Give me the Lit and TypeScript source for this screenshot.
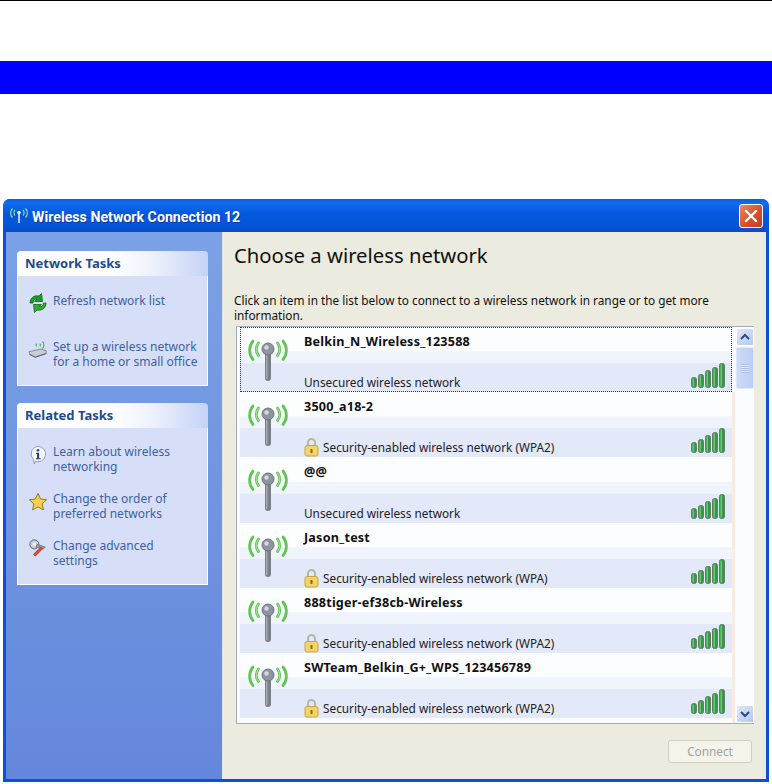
import { LitElement, html, css, svg } from "lit";
import { customElement } from "lit/decorators.js";

const nets = [
  { n: "Belkin_N_Wireless_123588", s: "Unsecured wireless network", lock: false, sel: true },
  { n: "3500_a18-2", s: "Security-enabled wireless network (WPA2)", lock: true },
  { n: "@@", s: "Unsecured wireless network", lock: false },
  { n: "Jason_test", s: "Security-enabled wireless network (WPA)", lock: true },
  { n: "888tiger-ef38cb-Wireless", s: "Security-enabled wireless network (WPA2)", lock: true },
  { n: "SWTeam_Belkin_G+_WPS_123456789", s: "Security-enabled wireless network (WPA2)", lock: true },
];

const antenna = html`<svg class="ant" width="44" height="50" viewBox="0 0 44 50">
  <g fill="none" stroke-linecap="round">
    <g stroke="#63c455" stroke-width="2.800">
      <path d="M12.500 5c-3 3.500-3 9 0 12.500"/><path d="M7 3c-4.500 5.500-4.500 13 0 18.500"/>
      <path d="M31.500 5c3 3.500 3 9 0 12.500"/><path d="M37 3c4.500 5.500 4.500 13 0 18.500"/>
    </g>
    <g stroke="#aee3a4" stroke-width="1">
      <path d="M12.500 5c-3 3.500-3 9 0 12.500"/><path d="M31.500 5c3 3.500 3 9 0 12.500"/>
    </g>
  </g>
  <rect x="19" y="11" width="6" height="32" rx="3" fill="#7a7f88"/>
  <rect x="20" y="16" width="1.500" height="25" fill="#a8abb2"/>
  <circle cx="22" cy="11" r="6" fill="#8f94a0" stroke="#6d717c"/>
  <circle cx="20.500" cy="9.500" r="2.200" fill="#d5d8df"/>
</svg>`;

const lock = html`<svg class="lock" width="15" height="20" viewBox="0 0 15 20">
  <path d="M4 9V5.500a3.500 3.500 0 0 1 7 0V9" fill="none" stroke="#b5b7a8" stroke-width="2"/>
  <rect x="1" y="8.500" width="13" height="10.500" rx="2" fill="#f2d468" stroke="#c9a63e"/>
  <rect x="6.500" y="12" width="2" height="4" fill="#8a6a14"/>
</svg>`;

const bars = html`<svg class="bars" width="34" height="25" viewBox="0 0 34 25">
  ${[[0, 10], [7, 13], [14, 17], [21, 20], [28, 24]].map(
    ([x, h]) => svg`<rect x=${x + 0.5} y=${24.5 - h} width="5" height=${h} rx="2" fill="#349a45" stroke="#5f7f68"/>
      <rect x=${x + 1.5} y=${25.5 - h} width="1.500" height=${h - 2} fill="#6cc676"/>`
  )}
</svg>`;

const refresh = html`<svg width="20" height="20" viewBox="0 0 20 20">
  <path d="M2 10C2 5 6 2 11 3l2.500-2.500 1 8-8 0 2.500-2.200C7 5.800 5.200 7 5 10z" fill="#1f9a2a" stroke="#11661a" stroke-width=".8"/>
  <path d="M18 10c0 5-4 8-9 7l-2.500 2.500-1-8 8 0-2.500 2.200c2.500.5 4.300-.7 4.500-3.700z" fill="#2cae2f" stroke="#11661a" stroke-width=".8"/>
</svg>`;

const router = html`<svg width="22" height="20" viewBox="0 0 22 20">
  <path d="M1 13l13-3 6 2v3L8 19l-6-3z" fill="#c9ccd4" stroke="#6d7280" stroke-width=".8"/>
  <path d="M2 16l6 3 12-4" fill="none" stroke="#555b68"/>
  <path d="M13 4c1 1 1 2 0 3M16 1.500c2 2 2 6 0 8M9.500 4c-1 1-1 2 0 3" fill="none" stroke="#49b04a" stroke-width="1.200"/>
</svg>`;

const info = html`<svg width="22" height="22" viewBox="0 0 22 22">
  <path d="M11 1.500a8.500 8.500 0 1 1-3 16.500l-1 3-1-5A8.500 8.500 0 0 1 11 1.500z" fill="#f4f6fb" stroke="#8a95ad"/>
  <circle cx="11" cy="5.800" r="1.400" fill="#1f3f8a"/>
  <path d="M9 8.500h3.200v6H14v1.300H8.800v-1.300h1.200V9.800H9z" fill="#1f3f8a"/>
</svg>`;

const star = html`<svg width="22" height="22" viewBox="0 0 22 22">
  <path d="M11 1.500l2.900 6.200 6.600.8-4.900 4.500 1.300 6.700L11 16.400 5.100 19.700l1.300-6.700L1.500 8.500l6.600-.8z" fill="#f6d24c" stroke="#8f7a24" stroke-width="1.100"/>
</svg>`;

const tools = html`<svg width="22" height="20" viewBox="0 0 22 20">
  <circle cx="7" cy="6" r="5" fill="#c9ccd4" stroke="#555b68"/>
  <circle cx="7" cy="6" r="2" fill="#f4f4f4"/>
  <path d="M10 6l9 3-2 2-8-2z" fill="#9a9ea8" stroke="#555b68" stroke-width=".7"/>
  <path d="M14 9L6 17l2 2 8-8z" fill="#d8512c" stroke="#96321a" stroke-width=".7"/>
</svg>`;

const wifiTitle = html`<svg width="24" height="18" viewBox="0 0 24 18">
  <g fill="none" stroke="#9fe39a" stroke-width="1.100">
    <path d="M8 3c-1.500 1.500-1.500 4 0 5.500M5.500 1.500c-2.500 2.500-2.500 6.500 0 9"/>
    <path d="M16 3c1.500 1.500 1.500 4 0 5.500M18.500 1.500c2.500 2.500 2.500 6.500 0 9"/>
  </g>
  <rect x="11.200" y="6" width="1.600" height="10" fill="#dfe6f2"/>
  <circle cx="12" cy="5.500" r="1.800" fill="#eef2f8"/>
</svg>`;

@customElement("app-root")
export class AppRoot extends LitElement {
  static styles = css`
    :host { display: block; width: 772px; height: 784px; background: #fff; overflow: hidden; font-family: "Noto Sans", sans-serif; }
    * { box-sizing: border-box; }
    .rule { height: 1px; background: #000; }
    .band { height: 33px; margin-top: 60px; background: #0000ff; }
    .win { width: 766px; height: 583px; margin: 105px 0 0 3px; display: flex; flex-direction: column; background: #0b50d8; border-radius: 7px 7px 0 0; overflow: hidden; }
    .title { height: 33px; flex: none; padding: 1px 6px 0 4px; display: flex; align-items: center; gap: 1px;
      background: linear-gradient(#0a5ce0 0%, #0f6cf0 12%, #0458dd 45%, #0455da 80%, #0a4ccb 100%); }
    .title span { color: #fff; font: 700 14.200px/1 "Roboto", sans-serif; flex: 1; padding-top: 3px; text-shadow: 1px 1px 0 #0a3aa0; }
    .close { width: 24px; height: 24px; flex: none; border: 1px solid #fff; border-radius: 3px; background: linear-gradient(135deg, #e88a6c, #d6502c 55%, #c23d1c); display: flex; align-items: center; justify-content: center; }
    .main { flex: 1; display: flex; padding: 0 3px 3px 3px; min-height: 0; }
    .side { width: 216px; flex: none; background: linear-gradient(#7ba2e6, #6487dc); padding: 19px 14px 0 11px; display: flex; flex-direction: column; gap: 17px; }
    .box { width: 191px; display: flex; flex-direction: column; }
    .box.a { height: 135px; } .box.b { height: 182px; }
    .bh { height: 25px; flex: none; border-radius: 4px 4px 0 0; padding: 0 0 0 8px; display: flex; align-items: center; color: #1c4a92; font: 700 13px/1 "Noto Sans", sans-serif;
      background: linear-gradient(90deg, #fff 0%, #fff 50%, #eef2fc 70%, #c6d3f7 100%); }
    .bb { flex: 1; background: #d6dff7; border: 1px solid #fff; border-top: none; padding: 0 0 0 10px; display: flex; flex-direction: column; }
    .a .bb { padding-top: 17px; gap: 26px; } .b .bb { padding-top: 16px; gap: 17px; }
    .task { display: flex; gap: 5px; color: #3f5fa3; font: 12px/15px "Noto Sans", sans-serif; align-items: flex-start; }
    .task .ic { width: 20px; flex: none; display: flex; justify-content: center; }
    .task div.t { white-space: pre; }
    .content { flex: 1; min-width: 0; background: #ecebdf; padding: 0 12px 0 11px; display: flex; flex-direction: column; border-left: 1px solid #e4e4d8; }
    h1 { margin: 11px 0 0; color: #111; font: 400 20.300px/24px "Noto Sans", sans-serif; height: 24px; }
    p { margin: 26px 0 0; height: 30px; font: 11.800px/15px "Noto Sans", sans-serif; color: #111; white-space: pre; }
    .list { margin: 3px 0 0 2px; width: 518px; height: 398px; flex: none; background: #fbfcff; border: 1px solid #a4adc0; display: flex; padding: 0 1px; }
    .rows { width: 494px; flex: none; padding-left: 2px; }
    .row { height: 65.200px; display: grid; grid-template-columns: 64px 1fr auto; position: relative; padding-right: 7px;
      background: linear-gradient(#fcfdff 0, #fcfdff 37%, #f0f4fd 38%, #f0f4fd 55%, #e3e9f9 56%, #e3e9f9 100%); }
    .row.sel { outline: 1px dotted #333; outline-offset: -1px; }
    .ant { margin: 11px 0 0 6px; }
    .txt { display: flex; flex-direction: column; justify-content: space-between; padding: 6px 0 1px; min-width: 0; }
    .nm { font: 700 12.600px/17px "Noto Sans", sans-serif; letter-spacing: .2px; color: #111; }
    .st { font: 11.800px/17px "Noto Sans", sans-serif; color: #222; display: flex; align-items: flex-end; gap: 4px; }
    .lock { margin-bottom: -1px; flex: none; }
    .bars { align-self: end; margin-bottom: 4px; }
    .peach { width: 3px; flex: none; background: #faebdf; margin-top: 65px; }
    .sb { width: 18px; flex: none; margin-left: 1px; padding-top: 1px; display: flex; flex-direction: column; background: #fbfcff; }
    .btn { height: 18px; flex: none; border-radius: 2px; background: linear-gradient(135deg, #dfe8fb, #b6c8f0); border: 1px solid #fff; display: flex; align-items: center; justify-content: center; }
    .thumb { height: 42px; margin-top: 1px; flex: none; border-radius: 2px; border: 1px solid #dfe8fb; background: linear-gradient(90deg, #cfdcf8, #bccdf4); display: flex; align-items: center; justify-content: center; }
    .grip { width: 8px; height: 9px; background: repeating-linear-gradient(#a9bce6 0 1px, #e4ebfb 1px 2px); }
    .sp { flex: 1; }
    .foot { display: flex; justify-content: flex-end; margin-top: 16px; padding-right: 2px; }
    .connect { width: 84px; height: 23px; border: 1px solid #cfcdbd; border-radius: 3px; background: #f5f4ec; color: #a3a297; font: 11.800px/21px "Noto Sans", sans-serif; text-align: center; }
  `;

  render() {
    return html`
      <div class="rule"></div>
      <div class="band"></div>
      <div class="win">
        <div class="title">
          ${wifiTitle}<span>Wireless Network Connection 12</span>
          <div class="close"><svg width="14" height="14" viewBox="0 0 14 14"><path d="M2 2l10 10M12 2L2 12" stroke="#fff" stroke-width="2.400" stroke-linecap="round"/></svg></div>
        </div>
        <div class="main">
          <div class="side">
            <div class="box a">
              <div class="bh">Network Tasks</div>
              <div class="bb">
                <div class="task"><div class="ic">${refresh}</div><div class="t">Refresh network list</div></div>
                <div class="task"><div class="ic">${router}</div><div class="t">Set up a wireless network
for a home or small office</div></div>
              </div>
            </div>
            <div class="box b">
              <div class="bh">Related Tasks</div>
              <div class="bb">
                <div class="task"><div class="ic">${info}</div><div class="t">Learn about wireless
networking</div></div>
                <div class="task"><div class="ic">${star}</div><div class="t">Change the order of
preferred networks</div></div>
                <div class="task"><div class="ic">${tools}</div><div class="t">Change advanced
settings</div></div>
              </div>
            </div>
          </div>
          <div class="content">
            <h1>Choose a wireless network</h1>
            <p>Click an item in the list below to connect to a wireless network in range or to get more
information.</p>
            <div class="list">
              <div class="rows">
                ${nets.map(
                  (r) => html`<div class="row ${r.sel ? "sel" : ""}">
                    ${antenna}
                    <div class="txt">
                      <div class="nm">${r.n}</div>
                      <div class="st">${r.lock ? lock : ""}<span>${r.s}</span></div>
                    </div>
                    ${bars}
                  </div>`
                )}
              </div>
              <div class="peach"></div>
              <div class="sb">
                <div class="btn"><svg width="10" height="8" viewBox="0 0 10 8"><path d="M1 6l4-4 4 4" fill="none" stroke="#2b4a86" stroke-width="2"/></svg></div>
                <div class="thumb"><div class="grip"></div></div>
                <div class="sp"></div>
                <div class="btn"><svg width="10" height="8" viewBox="0 0 10 8"><path d="M1 2l4 4 4-4" fill="none" stroke="#2b4a86" stroke-width="2"/></svg></div>
              </div>
            </div>
            <div class="foot"><div class="connect">Connect</div></div>
          </div>
        </div>
      </div>
    `;
  }
}
